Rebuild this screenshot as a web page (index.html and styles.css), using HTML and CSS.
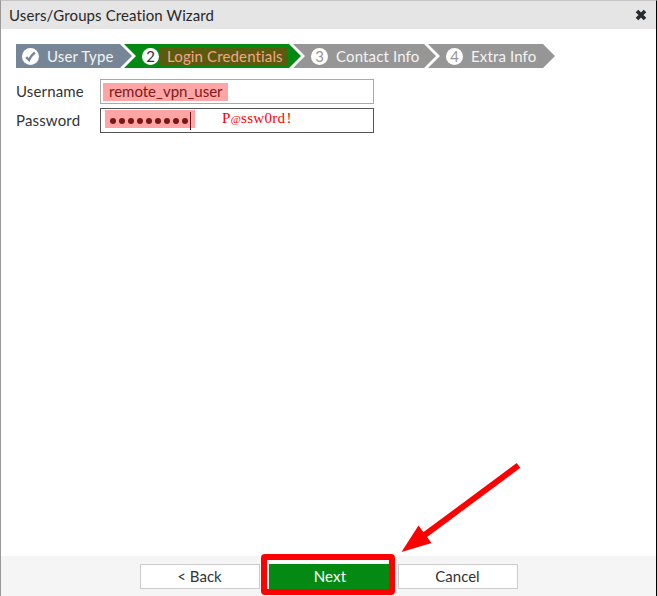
FILE: index.html
```html
<!DOCTYPE html>
<html lang="en">
<head>
<meta charset="utf-8">
<title>Users/Groups Creation Wizard</title>
<link rel="stylesheet" href="styles.css">
</head>
<body>
<div class="dialog">
  <header class="titlebar">
    <span class="title">Users/Groups Creation Wizard</span>
    <svg class="close" width="12" height="12" viewBox="0 0 12 12"><path d="M2 2L10 10M10 2L2 10"/></svg>
  </header>
  <main class="content">
    <div class="steps">
      <div class="step done"><span class="num"><svg width="11" height="11" viewBox="0 0 11 11"><path d="M1.200 6.200L4 9Q6 4.500 9.800 1.500"/></svg></span><span class="label">User Type</span></div>
      <div class="step current"><span class="num">2</span><span class="label marked">Login Credentials</span></div>
      <div class="step third"><span class="num">3</span><span class="label">Contact Info</span></div>
      <div class="step fourth"><span class="num">4</span><span class="label">Extra Info</span></div>
    </div>
    <div class="row">
      <span class="field-label">Username</span>
      <div class="field"><span class="value">remote_vpn_user</span></div>
    </div>
    <div class="row">
      <span class="field-label">Password</span>
      <div class="field focused">
        <span class="secret"><i></i><i></i><i></i><i></i><i></i><i></i><i></i><i></i><i></i><b class="caret"></b></span>
        <span class="note">P<span class="at">@</span>ssw0rd<span class="bang">!</span></span>
      </div>
    </div>
  </main>
  <footer class="actions">
    <div class="button">&lt; Back</div>
    <div class="button primary">Next</div>
    <div class="button">Cancel</div>
  </footer>
  <div class="frame"></div>
  <svg class="arrow" width="120" height="90" viewBox="400 463 120 90"><path d="M518.500 465.500L424 535.500"/><polygon points="401.500,552 418.500,525.500 431.500,543"/></svg>
</div>
</body>
</html>
```
FILE: styles.css
```css
* { box-sizing: border-box; }
body { margin: 0; background: #fff; }
.dialog {
  position: relative;
  display: flex;
  flex-direction: column;
  width: 657px;
  height: 596px;
  border-top: 1px solid #c5c5c5;
  border-left: 1px solid #999;
  border-right: 1px solid #000;
  overflow: hidden;
  font: 15px/24px Lato, sans-serif;
  color: #333;
}
.titlebar {
  display: flex;
  align-items: center;
  justify-content: space-between;
  height: 28px;
  padding: 0 9px 0 8px;
  background: #e5e5e5;
  color: #282828;
}
.title { letter-spacing: 0.11px; }
.close path { fill: none; stroke: #252a32; stroke-width: 3.6; }
.content { flex: 1; padding: 15px; }
.steps { display: flex; height: 24px; margin-bottom: 11px; }
.step {
  display: flex;
  align-items: center;
  height: 24px;
  padding-left: 18px;
  background: #969696;
  color: #f4f4f4;
  clip-path: polygon(0 0, calc(100% - 12px) 0, 100% 50%, calc(100% - 12px) 100%, 0 100%, 12px 50%);
}
.step + .step { margin-left: -8px; }
.done {
  width: 116px;
  padding-left: 6px;
  background: #778696;
  clip-path: polygon(0 0, calc(100% - 12px) 0, 100% 50%, calc(100% - 12px) 100%, 0 100%);
}
.current { width: 177px; background: #048a12; }
.third { width: 143px; }
.fourth { width: 127px; }
.num {
  display: flex;
  align-items: center;
  justify-content: center;
  flex: none;
  width: 17px;
  height: 17px;
  border-radius: 50%;
  background: #fff;
  color: #969696;
}
.num path { fill: none; stroke: #778696; stroke-width: 2.4; }
.current .num { color: #333; }
.label { margin-left: 8px; white-space: nowrap; letter-spacing: 0.14px; }
.marked {
  width: 128px;
  height: 18px;
  margin: 1px 0 0 1px;
  padding-left: 7px;
  line-height: 16px;
  background: #5a5b0c;
  color: #f5a48d;
}
.row { display: flex; height: 25px; margin-bottom: 4px; }
.field-label { width: 84px; line-height: 25px; letter-spacing: 0.16px; }
.field {
  display: flex;
  width: 274px;
  height: 25px;
  padding: 3px 2px;
  border: 1px solid #aaa;
}
.value {
  width: 125px;
  height: 18px;
  padding-left: 6px;
  line-height: 16px;
  background: #ffa5a5;
  color: #7c1a1a;
}
.focused { padding: 1px 4px; border-color: #555; }
.secret {
  display: flex;
  align-items: center;
  width: 90px;
  height: 18px;
  padding: 3px 0 0 5px;
  background: #ffa5a5;
}
.secret i {
  flex: none;
  width: 6px;
  height: 6px;
  margin-right: 3px;
  border-radius: 50%;
  background: #7c1515;
}
.caret { flex: none; width: 1px; height: 18px; margin-left: -1px; background: #601010; }
.note {
  margin-left: 27px;
  font: 15px/17px "Liberation Serif", serif;
  letter-spacing: 0.3px;
  color: #f00;
}
.at { font-size: 11px; }
.bang { margin-left: 1px; }
.actions {
  display: flex;
  gap: 9px;
  height: 40px;
  padding: 8px 0 0 139px;
  background: #f5f5f5;
}
.button {
  width: 120px;
  height: 25px;
  padding-right: 1px;
  border: 1px solid #ccc;
  background: #fff;
  text-align: center;
  line-height: 22px;
}
.primary { padding: 0 0 0 2px; border-color: #048a12; background: #048a12; color: #fff; box-shadow: -2px -4px 0 #fff; letter-spacing: 0.2px; }
.frame {
  position: absolute;
  left: 260px;
  top: 553px;
  width: 134px;
  height: 41px;
  border: 6px solid #f00;
  border-radius: 4px;
}
.arrow { position: absolute; left: 399px; top: 462px; }
.arrow path { stroke: #f00; stroke-width: 6; }
.arrow polygon { fill: #f00; }
```
